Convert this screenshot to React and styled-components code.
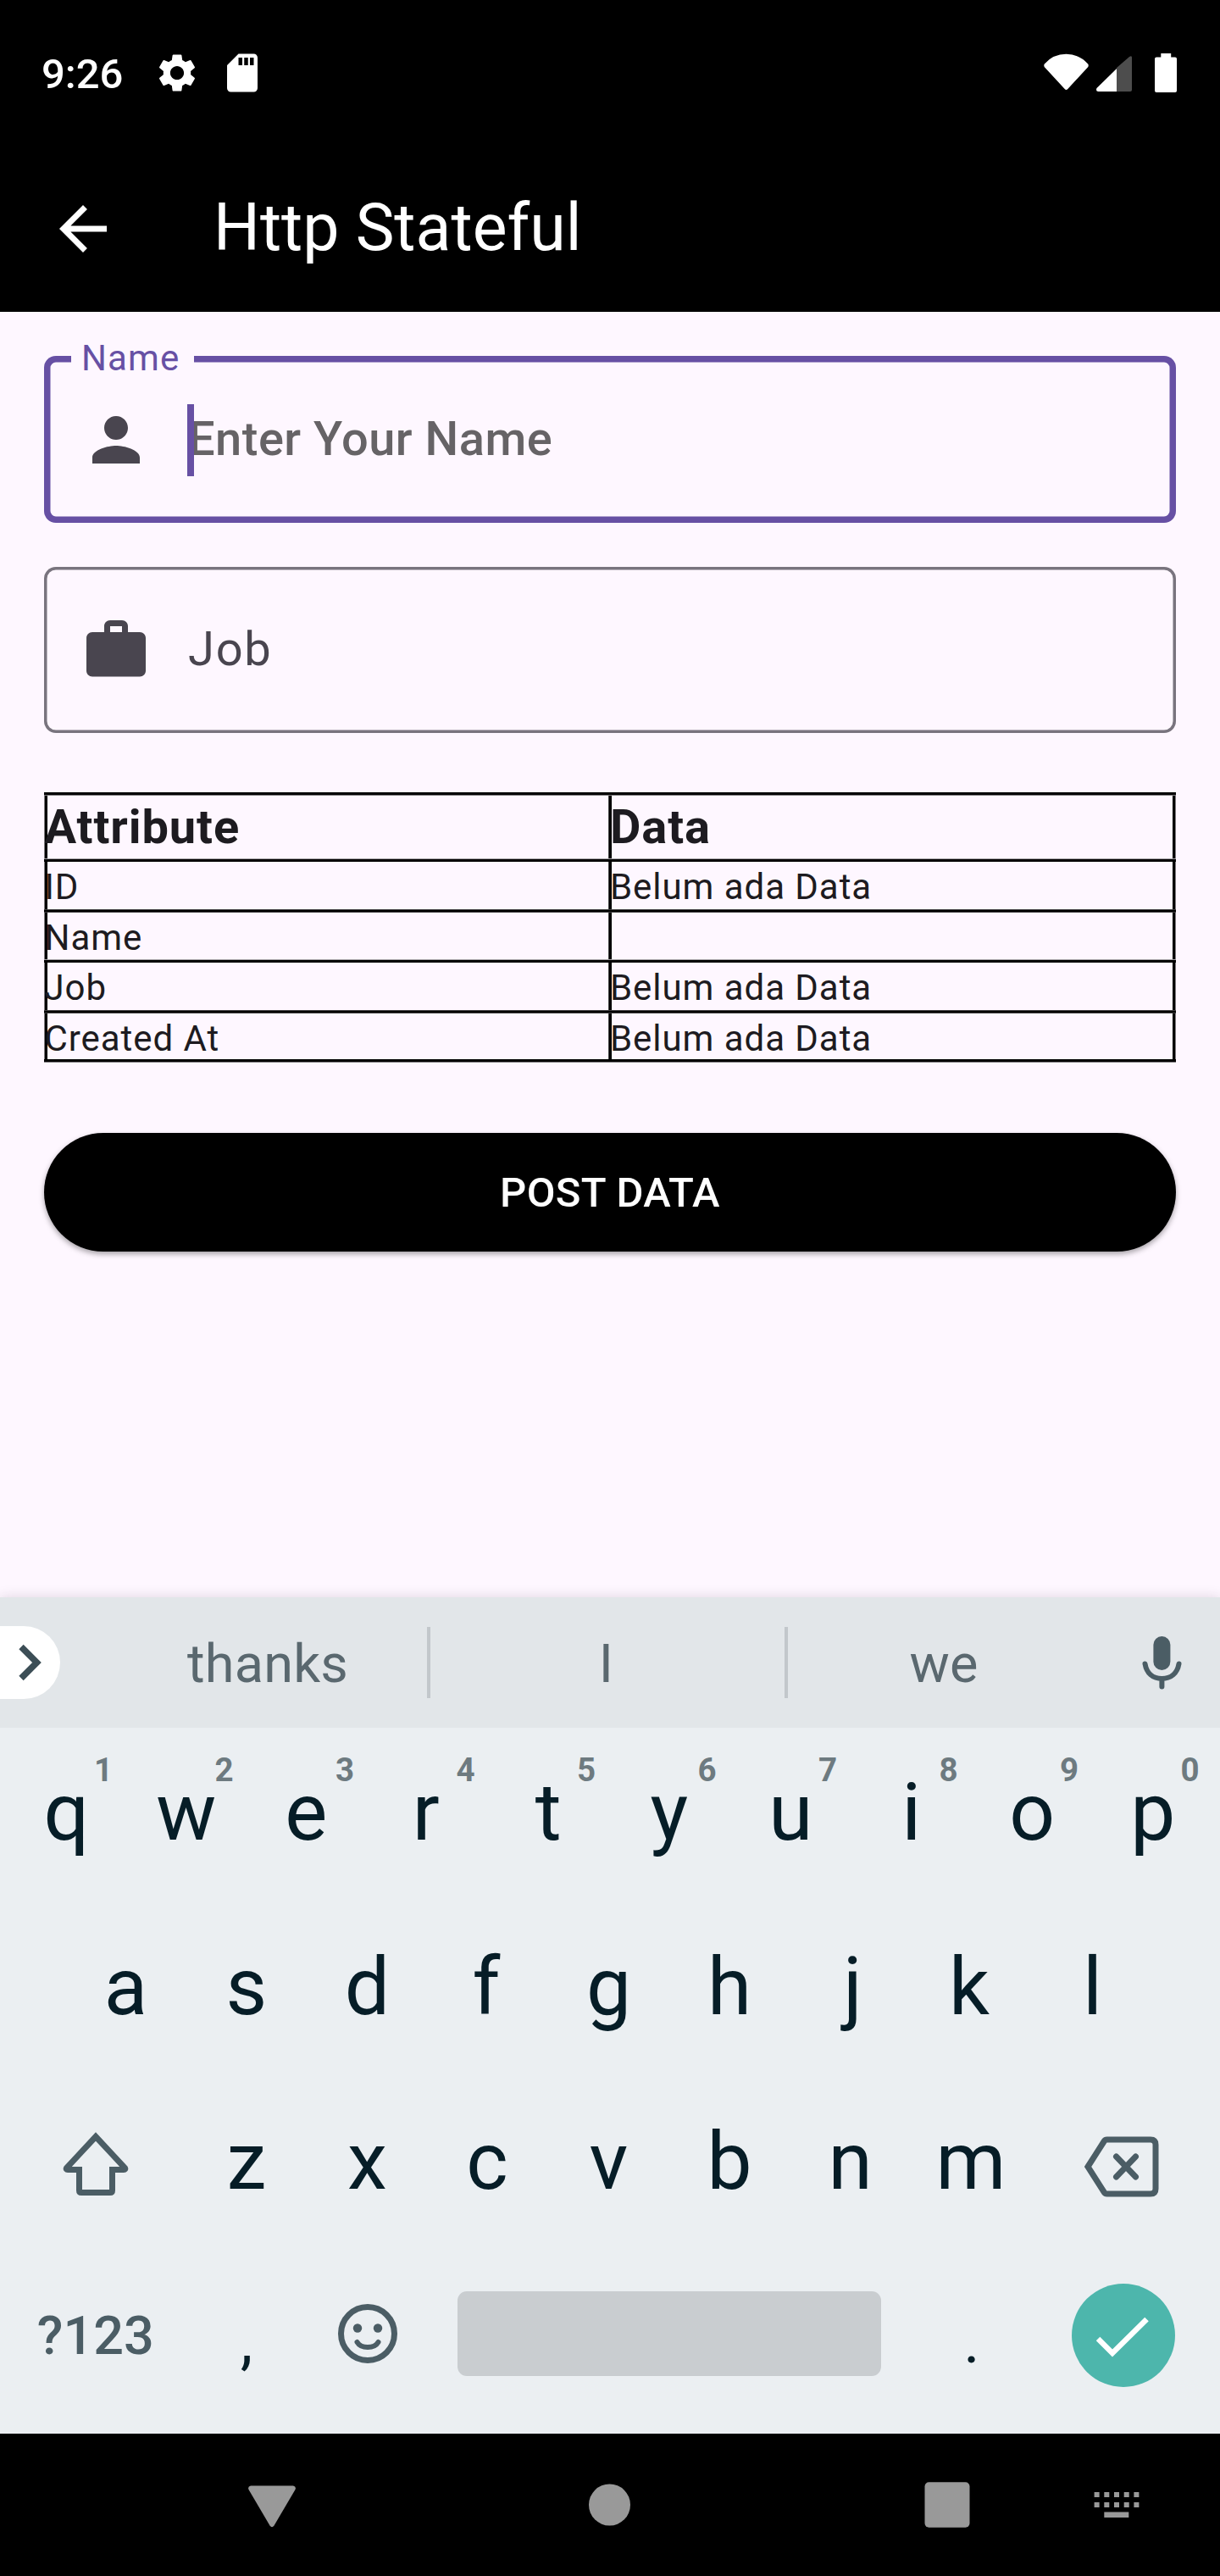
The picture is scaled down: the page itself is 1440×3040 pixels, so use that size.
import React from "react";
import styled, { createGlobalStyle } from "styled-components";
import { MdSettings, MdSdCard, MdArrowBack, MdPerson, MdWork } from "react-icons/md";

const GlobalStyle = createGlobalStyle`
  * { box-sizing: border-box; }
  body { margin: 0; background: #000; font-family: Roboto, "Liberation Sans", sans-serif; }
  svg { display: block; flex: none; }
`;

const Screen = styled.div`
  display: flex;
  flex-direction: column;
  width: 1440px;
  height: 3040px;
  background: #fef7ff;
  overflow: hidden;
`;

/* ---------- top bars ---------- */

const StatusBar = styled.header`
  display: flex;
  align-items: center;
  justify-content: space-between;
  height: 172px;
  padding: 0 51px 0 49px;
  background: #000;
  color: #fff;
`;

const StatusGroup = styled.div`
  display: flex;
  align-items: center;
  gap: ${(p) => p.$gap}px;
`;

const Clock = styled.time`
  width: 110px;
  padding-top: 4px;
  font-size: 49px;
  font-weight: 500;
  line-height: 58px;
`;

const AppBar = styled.div`
  display: flex;
  align-items: center;
  gap: 112px;
  height: 196px;
  padding-left: 56px;
  background: #000;
  color: #fff;
`;

const Title = styled.h1`
  margin: 0;
  padding-bottom: 3px;
  font-size: 77px;
  font-weight: 400;
  line-height: 98px;
`;

/* ---------- form ---------- */

const Main = styled.main`
  display: flex;
  flex-direction: column;
  flex: 1;
  padding: 52px 52px 0;
  color: #1d1b20;
`;

const Field = styled.div`
  position: relative;
  display: flex;
  align-items: center;
  gap: 43px;
  height: ${(p) => (p.$focused ? 197 : 196)}px;
  padding-left: 43px;
  border-radius: 14px;
  box-shadow: inset 0 0 0 ${(p) => (p.$focused ? "7.5px #6750a4" : "3.5px #79747e")};
  color: #49454f;
  & + & { margin-top: 52px; }
`;

const FloatingLabel = styled.label`
  position: absolute;
  top: -22px;
  left: 32px;
  width: 145px;
  padding: 1px 0 0 12px;
  background: #fef7ff;
  color: #6750a4;
  font-size: 42px;
  line-height: 48px;
  letter-spacing: 1.1px;
`;

const FieldText = styled.span`
  padding-bottom: 2px;
  font-size: 56px;
  line-height: 84px;
  letter-spacing: ${(p) => (p.$hint ? 0.48 : 1.75)}px;
  font-weight: ${(p) => (p.$hint ? 500 : 400)};
  color: ${(p) => (p.$hint ? "#666366" : "#49454f")};
`;

const Caret = styled.i`
  position: absolute;
  left: 169px;
  top: 57px;
  width: 8px;
  height: 85px;
  background: #6750a4;
`;

const Table = styled.div`
  display: flex;
  flex-direction: column;
  margin-top: 70px;
`;

const Rule = styled.div`
  height: 4px;
  background: linear-gradient(
    to bottom,
    rgba(0, 0, 0, ${(p) => p.$top}) 25%,
    #000 25% 75%,
    rgba(0, 0, 0, ${(p) => p.$bottom}) 75%
  );
`;

const Row = styled.div`
  display: grid;
  grid-template-columns: 666px 670px;
  grid-template-rows: 100%;
  height: ${(p) => p.$height}px;
  background: linear-gradient(to right, #000 75%, rgba(0, 0, 0, 0.5) 75%) right / 4px 100% no-repeat;
`;

const Cell = styled.div`
  padding-left: ${(p) => (p.$second ? 2 : 0.5)}px;
  background: linear-gradient(to right, rgba(0, 0, 0, ${(p) => (p.$second ? 0.75 : 0.5)}) 25%, #000 25%) left / 4px 100% no-repeat;
  font-size: ${(p) => (p.$head ? 56 : 42)}px;
  font-weight: ${(p) => (p.$head ? 700 : 400)};
  line-height: ${(p) => (p.$head ? 74 : 60)}px;
  letter-spacing: ${(p) => (p.$head ? 0.9 : 0.95)}px;
  white-space: nowrap;
`;

const PostButton = styled.button`
  height: 140px;
  margin-top: 83px;
  padding: 1px 0 0;
  border: 0;
  border-radius: 70px;
  background: #000;
  color: #fff;
  box-shadow: 0 3px 6px rgba(0, 0, 0, 0.35);
  font: 500 49px/70px Roboto, "Liberation Sans", sans-serif;
  letter-spacing: 0.35px;
`;

/* ---------- keyboard ---------- */

const Keyboard = styled.section`
  display: flex;
  flex-direction: column;
  height: 987px;
  background: #ebeff2;
  box-shadow: 0 0 14px rgba(60, 30, 60, 0.16);
`;

const SuggestionBar = styled.div`
  display: flex;
  align-items: center;
  height: 154px;
  background: #e2e6e9;
`;

const Expand = styled.div`
  display: flex;
  align-items: center;
  width: 71px;
  height: 86px;
  padding-left: 21px;
  border-radius: 0 43px 43px 0;
  background: #fff;
`;

const Suggestion = styled.div`
  width: ${(p) => p.$width}px;
  margin-left: ${(p) => p.$offset || 0}px;
  padding-top: 4px;
  padding-right: ${(p) => p.$trim || 0}px;
  text-align: center;
  font-size: 63px;
  line-height: 80px;
  letter-spacing: 0.2px;
  color: #5a686f;
`;

const Divider = styled.i`
  width: 4px;
  height: 84px;
  background: #c2c7cb;
`;

const KeyRow = styled.div`
  display: flex;
  height: 206px;
  padding-left: ${(p) => (p.$inset ? 77.25 : 6)}px;
`;

const Key = styled.div`
  position: relative;
  display: flex;
  align-items: center;
  justify-content: center;
  width: ${(p) => 142.5 * (p.$span || 1)}px;
  padding-top: ${(p) => p.$drop || 0}px;
  padding-bottom: ${(p) => p.$lift ?? 6}px;
  padding-left: ${(p) => Math.max(0, 2 * (p.$nudge || 0))}px;
  padding-right: ${(p) => Math.max(0, -2 * (p.$nudge || 0))}px;
  color: #061d27;
  font-size: ${(p) => (p.$mark ? 73.5 : 94.5)}px;
  line-height: 110px;
`;

const Hint = styled.sup`
  position: absolute;
  top: 27px;
  left: 96px;
  width: 40px;
  text-align: center;
  color: #6d7a80;
  font-size: 38.5px;
  font-weight: 700;
  line-height: 46px;
`;

const ModeLabel = styled.span`
  color: #4b5d65;
  font-size: 63px;
  font-weight: 500;
`;

const SpaceBar = styled.div`
  width: 500px;
  height: 100px;
  border-radius: 11px;
  background: #c9cdd0;
`;

const Done = styled.div`
  display: flex;
  align-items: center;
  justify-content: center;
  width: 122px;
  height: 122px;
  border-radius: 50%;
  background: #4db6ac;
`;

/* ---------- navigation ---------- */

const NavBar = styled.nav`
  display: flex;
  align-items: center;
  height: 168px;
  padding-left: 293px;
  background: #000;
`;

const NavItem = styled.div`
  margin-left: ${(p) => p.$gap || 0}px;
  padding-top: ${(p) => p.$drop || 0}px;
`;

const stroke = { fill: "none", stroke: "#4b5d65", strokeWidth: 7 };

const records = [
  ["ID", "Belum ada Data", 56, 0.75, 0.75],
  ["Name", "", 55, 0.35, 1],
  ["Job", "Belum ada Data", 56, 0.75, 0.75],
  ["Created At", "Belum ada Data", 54, 1, 0.5],
];

const nudges = { q: 1, r: -2, e: -1, f: -2, j: 3, k: -2, c: -1, p: 1, o: 1, u: 1, i: 1, l: 1 };

const Letters = ({ text, hints }) =>
  [...text].map((c, i) => (
    <Key key={c} $nudge={nudges[c]}>
      {c}
      {hints && <Hint>{hints[i]}</Hint>}
    </Key>
  ));

export default function App() {
  return (
    <Screen>
      <GlobalStyle />
      <StatusBar>
        <StatusGroup $gap={23}>
          <Clock>9:26</Clock>
          <MdSettings size={54} />
          <MdSdCard size={54} />
        </StatusGroup>
        <StatusGroup $gap={0}>
          <svg width="131" height="46" viewBox="0 0 131 46">
            <path d="M0.8 12.5Q11 0.8 26.5 0.8T52.2 12.5Q53.2 14 52.3 16L28.3 42Q26.5 44 24.7 42L0.7 16Q-0.2 14 0.8 12.5Z" fill="#fff" />
            <path d="M86 17V45H102Q104 45 104 43V5Q104 2 101 4Z" fill="#4d4d4d" />
            <path d="M86 18V45H64.5Q62 45 62 42.5Q62 41.5 63 40.5Z" fill="#fff" />
          </svg>
          <svg width="26" height="46" viewBox="0 0 26 46">
            <path d="M7.3 0H19.2V4.5H24Q26 4.5 26 6.5V44Q26 46 24 46H2Q0 46 0 44V6.5Q0 4.5 2 4.5H7.3Z" fill="#fff" />
          </svg>
        </StatusGroup>
      </StatusBar>
      <AppBar>
        <MdArrowBack size={84} />
        <Title>Http Stateful</Title>
      </AppBar>

      <Main>
        <Field $focused>
          <FloatingLabel>Name</FloatingLabel>
          <MdPerson size={84} />
          <FieldText $hint>Enter Your Name</FieldText>
          <Caret />
        </Field>
        <Field>
          <MdWork size={84} />
          <FieldText>Job</FieldText>
        </Field>

        <Table>
          <Rule $top={1} $bottom={0.5} />
          <Row $height={74}>
            <Cell $head>Attribute</Cell>
            <Cell $head $second>Data</Cell>
          </Row>
          <Rule $top={0.35} $bottom={1} />
          {records.map(([name, value, height, top, bottom]) => (
            <React.Fragment key={name}>
              <Row $height={height}>
                <Cell>{name}</Cell>
                <Cell $second>{value}</Cell>
              </Row>
              <Rule $top={top} $bottom={bottom} />
            </React.Fragment>
          ))}
        </Table>

        <PostButton>POST DATA</PostButton>
      </Main>

      <Keyboard>
        <SuggestionBar>
          <Expand>
            <svg width="28" height="44" viewBox="0 0 28 44">
              <path d="M4 3.5L22.5 22L4 40.5" fill="none" stroke="#3c4e56" strokeWidth="7.5" />
            </svg>
          </Expand>
          <Suggestion $width={376} $offset={57}>thanks</Suggestion>
          <Divider />
          <Suggestion $width={418} $trim={3}>I</Suggestion>
          <Divider />
          <Suggestion $width={368}>we</Suggestion>
          <svg width="142" height="64" viewBox="0 0 142 64">
            <rect x="63.4" y="1" width="20" height="40" rx="10" fill="#4b5d65" />
            <path d="M53.5 33.5C55.5 45 63 51 73.4 51S91.5 45 93.5 33.5M73.4 51V60.5" fill="none" stroke="#4b5d65" strokeWidth="6" strokeLinecap="round" />
          </svg>
        </SuggestionBar>

        <KeyRow>
          <Letters text="qwertyuiop" hints="1234567890" />
        </KeyRow>
        <KeyRow $inset>
          <Letters text="asdfghjkl" />
        </KeyRow>
        <KeyRow>
          <Key $span={1.5} $lift={0}>
            <svg width="80" height="76" viewBox="0 0 80 76">
              <path d="M40 5.5L5.5 42.5Q4.5 44.5 7 44.5H20.5V69Q20.5 71.5 23 71.5H57Q59.5 71.5 59.5 69V44.5H73Q75.5 44.5 74.5 42.5Z" {...stroke} />
            </svg>
          </Key>
          <Letters text="zxcvbnm" />
          <Key $span={1.5} $lift={0} $drop={5} $nudge={2}>
            <svg width="94" height="72" viewBox="0 0 94 72">
              <path d="M5 36L24.5 5.5Q25.5 4 27.5 4H79Q85 4 85 10V62Q85 68 79 68H27.5Q25.5 68 24.5 66.5Z" {...stroke} />
              <path d="M38.5 24L61.5 48M61.5 24L38.5 48" {...stroke} strokeLinecap="round" />
            </svg>
          </Key>
        </KeyRow>
        <KeyRow>
          <Key $span={1.5}>
            <ModeLabel>?123</ModeLabel>
          </Key>
          <Key $mark $lift={0} $drop={6}>,</Key>
          <Key $lift={12}>
            <svg width="70" height="70" viewBox="0 0 70 70">
              <circle cx="35" cy="35" r="31.5" {...stroke} />
              <circle cx="23" cy="28.5" r="5.2" fill="#4b5d65" />
              <circle cx="47" cy="28.5" r="5.2" fill="#4b5d65" />
              <path d="M22.5 45Q26 51 35 51T47.5 45" {...stroke} strokeWidth="6" strokeLinecap="round" />
            </svg>
          </Key>
          <Key $span={4} $lift={12}>
            <SpaceBar />
          </Key>
          <Key $mark $lift={0} $drop={6} $nudge={1}>.</Key>
          <Key $span={1.5} $lift={8} $nudge={1.5}>
            <Done>
              <svg width="64" height="60" viewBox="0 0 64 60">
                <path d="M2 34L19 51L59.5 11" fill="none" stroke="#fff" strokeWidth="6.5" />
              </svg>
            </Done>
          </Key>
        </KeyRow>
      </Keyboard>

      <NavBar>
        <NavItem $drop={3}>
          <svg width="56" height="50" viewBox="0 0 56 50">
            <path d="M3 0.5H53Q57 1.5 55.5 5L30.5 47.5Q28 51 25.5 47.5L0.5 5Q-1 1.5 3 0.5Z" fill="#999" />
          </svg>
        </NavItem>
        <NavItem $gap={345}>
          <svg width="50" height="50" viewBox="0 0 50 50">
            <circle cx="25.5" cy="25" r="24.5" fill="#999" />
          </svg>
        </NavItem>
        <NavItem $gap={347}>
          <svg width="54" height="54" viewBox="0 0 54 54">
            <rect x="0.5" y="0.3" width="53" height="53.5" rx="5" fill="#999" />
          </svg>
        </NavItem>
        <NavItem $gap={146}>
          <svg width="54" height="30" viewBox="0 0 54 30">
            {[0, 1, 2, 3, 4].map((i) => (
              <path key={i} d={`M${0.6 + i * 11.7} 0h6v6h-6zM${0.6 + i * 11.7} 12h6v6h-6z`} fill="#999" />
            ))}
            <rect x="12.3" y="23.5" width="29" height="6.5" fill="#999" />
          </svg>
        </NavItem>
      </NavBar>
    </Screen>
  );
}
